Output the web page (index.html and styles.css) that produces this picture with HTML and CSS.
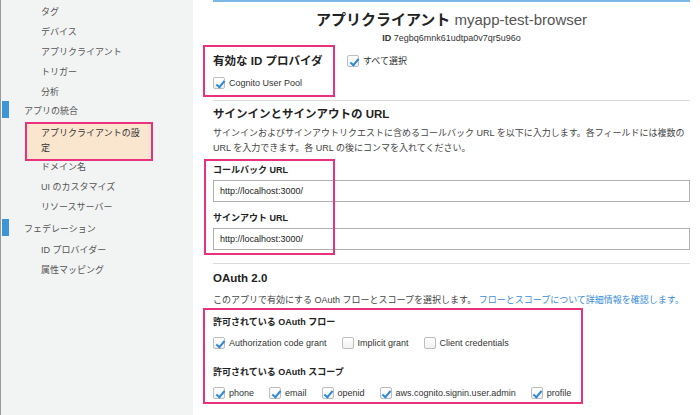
FILE: index.html
```html
<!DOCTYPE html>
<html lang="ja">
<head>
<meta charset="utf-8">
<link rel="stylesheet" href="styles.css">
</head>
<body>
<div class="app">
  <nav class="sidebar">
    <div class="nav-item">タグ</div>
    <div class="nav-item">デバイス</div>
    <div class="nav-item">アプリクライアント</div>
    <div class="nav-item">トリガー</div>
    <div class="nav-item nav-last">分析</div>
    <div class="nav-group"><span class="marker"></span><span>アプリの統合</span></div>
    <div class="nav-item nav-active">アプリクライアントの設定</div>
    <div class="nav-item nav-after">ドメイン名</div>
    <div class="nav-item">UI のカスタマイズ</div>
    <div class="nav-item nav-last2">リソースサーバー</div>
    <div class="nav-group nav-group2"><span class="marker"></span><span>フェデレーション</span></div>
    <div class="nav-item nav-first">ID プロバイダー</div>
    <div class="nav-item">属性マッピング</div>
  </nav>

  <main class="main">
    <div class="topline"></div>
    <h1 class="title"><b>アプリクライアント</b> <span class="title-name">myapp-test-browser</span></h1>
    <div class="client-id"><b>ID</b> 7egbq6mnk61udtpa0v7qr5u96o</div>

    <section class="providers annotated">
      <div class="prov-col">
        <h2 class="heading">有効な ID プロバイダ</h2>
        <label class="cb"><span class="box checked"></span>Cognito User Pool</label>
      </div>
      <label class="cb select-all"><span class="box checked"></span>すべて選択</label>
      <div class="hl hl1"></div>
    </section>

    <hr class="sep sep1">

    <h2 class="heading h-sign">サインインとサインアウトの URL</h2>
    <p class="desc">サインインおよびサインアウトリクエストに含めるコールバック URL を以下に入力します。各フィールドには複数の URL を入力できます。各 URL の後にコンマを入れてください。</p>

    <section class="urls annotated">
      <div class="field-label">コールバック URL</div>
      <div class="input">http://localhost:3000/</div>
      <div class="field-label fl2">サインアウト URL</div>
      <div class="input">http://localhost:3000/</div>
      <div class="hl hl2"></div>
    </section>

    <hr class="sep sep2">

    <h2 class="heading h-oauth">OAuth 2.0</h2>
    <p class="desc desc2">このアプリで有効にする OAuth フローとスコープを選択します。 <span class="link">フローとスコープについて詳細情報を確認します。</span></p>

    <section class="oauth annotated">
      <div class="field-label">許可されている OAuth フロー</div>
      <div class="cb-row">
        <label class="cb"><span class="box checked"></span>Authorization code grant</label>
        <label class="cb"><span class="box"></span>Implicit grant</label>
        <label class="cb"><span class="box"></span>Client credentials</label>
      </div>
      <div class="field-label fl3">許可されている OAuth スコープ</div>
      <div class="cb-row">
        <label class="cb"><span class="box checked"></span>phone</label>
        <label class="cb"><span class="box checked"></span>email</label>
        <label class="cb"><span class="box checked"></span>openid</label>
        <label class="cb"><span class="box checked"></span>aws.cognito.signin.user.admin</label>
        <label class="cb"><span class="box checked"></span>profile</label>
      </div>
      <div class="hl hl3"></div>
    </section>
  </main>
</div>
</body>
</html>
```

FILE: styles.css
```css
* { box-sizing: border-box; }
html, body { margin: 0; padding: 0; }
body {
  font-family: "Liberation Sans", "Noto Sans CJK JP", sans-serif;
  color: #333;
  background: #fff;
  width: 700px;
  height: 415px;
  overflow: hidden;
}
.app { display: flex; height: 415px; }

/* Sidebar */
.sidebar {
  width: 193px;
  flex: none;
  background: #f2f3f3;
  border-left: 1px solid #9a9a9a;
  padding-top: 5px;
  font-size: 9px;
  color: #555;
}
.nav-item {
  line-height: 14px;
  height: 14px;
  margin-bottom: 6px;
  padding-left: 40px;
  white-space: nowrap;
}
.nav-last { margin-bottom: 4px; }
.nav-group {
  display: flex;
  align-items: center;
  height: 14px;
  margin-bottom: 5px;
  padding-left: 1px;
  color: #555;
}
.marker {
  width: 7px;
  height: 17px;
  background: #3d95d8;
  margin-right: 15px;
  margin-top: -2px;
}
.nav-active {
  height: auto;
  width: 128px;
  margin-left: 24px;
  padding: 2px 6px 3px 14px;
  line-height: 15px;
  white-space: normal;
  background: #fae5cf;
  border: 2px solid #e9327d;
  color: #333;
  margin-bottom: -1px;
}
.nav-last2 { margin-bottom: 7px; }
.nav-group2 { margin-bottom: 8px; }

/* Main */
.main {
  flex: 1;
  padding: 0 10px 0 20px;
  font-size: 9px;
}
.topline { height: 2px; background: #7db9e8; }
.title {
  margin: 8px 0 0;
  font-size: 15px;
  line-height: 20px;
  text-align: center;
  font-weight: normal;
  color: #222;
}
.title b { font-weight: bold; }
.title-name { color: #555; }
.client-id {
  margin-top: 2px;
  text-align: center;
  font-size: 9px;
  line-height: 12px;
  color: #333;
}

.annotated { position: relative; }
.hl {
  position: absolute;
  border: 2px solid #e9327d;
  pointer-events: none;
}

.providers {
  display: flex;
  align-items: flex-start;
  margin-top: 1px;
  padding-top: 7px;
  padding-bottom: 7px;
}
.prov-col { width: 122px; flex: none; }
.heading {
  margin: 0;
  font-size: 11.5px;
  line-height: 18px;
  font-weight: bold;
  color: #222;
}
.prov-col .cb { margin-top: 6px; }
.select-all { margin-left: 12px; margin-top: 2px; }
.hl1 { left: -10px; top: 0; width: 132px; height: 52px; }

.cb {
  display: inline-flex;
  align-items: center;
  font-size: 9px;
  line-height: 14px;
  color: #333;
  white-space: nowrap;
}
.box {
  width: 12px;
  height: 12px;
  border: 1px solid #bdbdbd;
  border-radius: 2px;
  background: linear-gradient(#fff, #f0f0f0);
  margin-right: 4px;
  flex: none;
  position: relative;
}
.box.checked::after {
  content: "";
  position: absolute;
  left: 3.5px;
  top: 0.5px;
  width: 3px;
  height: 7px;
  border-right: 2px solid #2f8ad8;
  border-bottom: 2px solid #2f8ad8;
  transform: rotate(40deg);
}

.sep {
  border: 0;
  border-top: 1px solid #dcdcdc;
  margin: 0;
}
.sep1 { margin-top: 2px; }
.h-sign { margin-top: 4px; }
.desc {
  margin: 3px 0 0;
  font-size: 9px;
  line-height: 15px;
  color: #444;
}

.urls { padding-top: 7px; padding-bottom: 4px; }
.field-label {
  font-size: 9px;
  font-weight: bold;
  line-height: 14px;
  color: #222;
}
.input {
  margin-top: 3px;
  height: 22px;
  border: 1px solid #b0b0b0;
  padding-left: 6px;
  line-height: 20px;
  font-size: 9px;
  color: #222;
}
.fl2 { margin-top: 9px; }
.hl2 { left: -9px; top: 3px; width: 131px; height: 96px; }

.sep2 { margin-top: 9px; }
.h-oauth { margin-top: 5px; }
.desc2 { margin-top: 6px; }
.link { color: #3a8dd6; }

.oauth { padding-top: 7px; padding-bottom: 6px; }
.cb-row {
  display: flex;
  gap: 15px;
  margin-top: 7px;
}
.fl3 { margin-top: 15px; }
.hl3 { left: -10px; top: 0px; width: 380px; height: 96px; }
```
